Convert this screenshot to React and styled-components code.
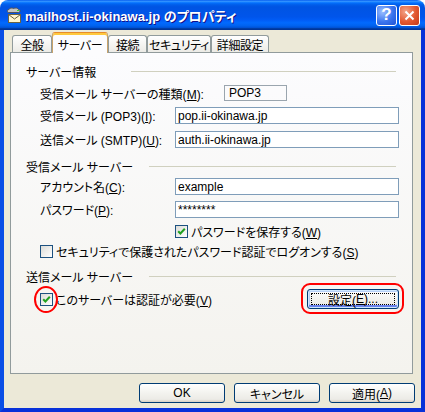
import styled, { createGlobalStyle, css } from "styled-components";

const GlobalStyle = createGlobalStyle`
  html, body {
    margin: 0;
    padding: 0;
    background: #ffffff;
  }
  body {
    font-family: "Liberation Sans", "Noto Sans CJK JP", sans-serif;
    font-size: 12px;
    font-feature-settings: "palt";
    color: #000;
  }
`;

const Window = styled.div`
  width: 425px;
  height: 412px;
  display: flex;
  flex-direction: column;
`;

const TitleBar = styled.div`
  height: 30px;
  flex: none;
  box-sizing: border-box;
  display: flex;
  align-items: center;
  padding: 0 5px 0 6px;
  border-radius: 8px 8px 0 0;
  background: linear-gradient(
    to bottom,
    #0058ee 0%,
    #3593ff 4%,
    #288eff 6%,
    #127dff 8%,
    #036ffc 10%,
    #0262ee 14%,
    #0057e5 20%,
    #0054e3 24%,
    #0055eb 56%,
    #005bf5 66%,
    #026afe 76%,
    #0062ef 86%,
    #0052d6 92%,
    #0040ab 94%,
    #003092 100%
  );
`;

const Title = styled.span`
  margin-left: 3px;
  flex: 1;
  color: #fff;
  font-weight: bold;
  font-size: 13px;
  white-space: nowrap;
  text-shadow: 1px 1px 0 #0f1089;
`;

const CaptionButtons = styled.div`
  display: flex;
  gap: 2px;
`;

const CaptionButton = styled.div`
  width: 21px;
  height: 21px;
  box-sizing: border-box;
  border: 1px solid #fff;
  border-radius: 3px;
  display: flex;
  align-items: center;
  justify-content: center;
  color: #fff;
  font-family: "Liberation Sans", sans-serif;
  font-weight: bold;
  font-size: 17px;
  background: ${(p) =>
    p.$close
      ? "radial-gradient(circle at 30% 30%, #f3a58a 0%, #e2572f 55%, #c23a1a 100%)"
      : "radial-gradient(circle at 30% 30%, #9cc0ff 0%, #3a74ee 55%, #1f52d4 100%)"};
`;

const Body = styled.div`
  flex: 1;
  box-sizing: border-box;
  background: #ece9d8;
  border: 4px solid #0831d9;
  border-top: 0;
  border-left-color: #0a4ee6;
  padding: 2px 8px 5px 6px;
  display: flex;
  flex-direction: column;
`;

const TabRow = styled.div`
  display: flex;
  align-items: flex-end;
  height: 20px;
  margin-left: 2px;
  position: relative;
  z-index: 1;
`;

const Tab = styled.div`
  width: ${(p) => p.$w}px;
  height: 17px;
  box-sizing: border-box;
  border: 1px solid #919b9c;
  border-bottom: 0;
  border-radius: 3px 3px 0 0;
  background: linear-gradient(#ffffff, #ecebe6);
  display: flex;
  align-items: center;
  justify-content: center;
  padding-top: 1px;
  white-space: nowrap;
  letter-spacing: -0.4px;
  ${(p) =>
    p.$active &&
    css`
      height: 21px;
      margin-bottom: -1px;
      background: #fcfcfe;
      border-top: 1px solid #e68b2c;
      border-left-color: #c9a36a;
      border-right-color: #c9a36a;
      box-shadow: inset 0 2px 0 #ffc83c;
      padding-top: 2px;
    `}
`;

const Pane = styled.div`
  height: 322px;
  box-sizing: border-box;
  border: 1px solid #919b9c;
  background: linear-gradient(#fcfcfe, #f4f3ee);
  padding: 11px 13px 0 15px;
  display: flex;
  flex-direction: column;
`;

const GroupHeader = styled.div`
  display: flex;
  align-items: center;
  height: 14px;
  margin-top: ${(p) => p.$top || 0}px;
`;

const GroupTitle = styled.span`
  width: ${(p) => p.$w}px;
  flex: none;
  white-space: nowrap;
`;

const GroupLine = styled.div`
  flex: 1;
  height: 1px;
  margin-right: 3px;
  background: #d0d0bf;
`;

const FieldRow = styled.div`
  display: flex;
  align-items: center;
  height: ${(p) => p.$h || 17}px;
  margin-top: ${(p) => p.$top}px;
  padding-left: ${(p) => p.$indent ?? 14}px;
`;

const Label = styled.label`
  width: ${(p) => p.$w || 135}px;
  flex: none;
  white-space: nowrap;
`;

const U = styled.span`
  text-decoration: underline;
`;

const TextBox = styled.input`
  flex: 1;
  min-width: 0;
  height: 17px;
  box-sizing: border-box;
  border: 1px solid #7f9db9;
  background: #fff;
  padding: 0 2px;
  margin: 0;
  font: inherit;
  color: #000;
  outline: none;
`;

const StaticBox = styled.div`
  width: 63px;
  height: 16px;
  box-sizing: border-box;
  border: 1px solid #9aa5ae;
  padding: 0 4px;
  display: flex;
  align-items: center;
`;

const CheckLine = styled.div`
  display: flex;
  align-items: center;
  gap: 3px;
  white-space: nowrap;
`;

const Box = styled.span`
  position: relative;
  width: 13px;
  height: 13px;
  flex: none;
  box-sizing: border-box;
  border: 1px solid #1c5180;
  background: linear-gradient(135deg, #dcdcd7, #ffffff);
  display: flex;
  align-items: center;
  justify-content: center;
  ${(p) =>
    p.$marked &&
    css`
      &::after {
        content: "";
        position: absolute;
        left: -7px;
        top: -8px;
        width: 20px;
        height: 23px;
        border: 2px solid #ff0000;
        border-radius: 50%;
      }
    `}
`;

const XPButton = styled.button`
  position: relative;
  width: ${(p) => p.$w || 86}px;
  height: 20px;
  box-sizing: border-box;
  margin: 0;
  padding: 0;
  border: 1px solid #003c74;
  border-radius: 3px;
  background: linear-gradient(#ffffff 0%, #f4f4f0 45%, #ecebe6 85%, #d6d0c5 100%);
  font: inherit;
  color: #000;
  display: flex;
  align-items: center;
  justify-content: center;
  ${(p) =>
    p.$focused &&
    css`
      box-shadow: inset 0 0 0 1px #cee7ff, inset 0 -2px 0 1px #6982ee,
        inset 1px 1px 0 1px #b8d1f8;
      &::before {
        content: "";
        position: absolute;
        inset: 3px;
        border: 1px dotted #000;
      }
    `}
  ${(p) =>
    p.$marked &&
    css`
      &::after {
        content: "";
        position: absolute;
        left: -7px;
        right: -6px;
        top: -7px;
        bottom: -6px;
        border: 2px solid #ff0000;
        border-radius: 9px;
      }
    `}
`;

const SettingsSlot = styled.div`
  margin-left: auto;
`;

const ButtonRow = styled.div`
  display: flex;
  justify-content: flex-end;
  gap: 9px;
  margin-top: 9px;
  margin-right: -2px;
`;

const MailIcon = () => (
  <svg width="16" height="16" viewBox="0 0 16 16">
    <path
      d="M2.5 5.5 C1 5.5 1 2.5 3 2.5 C3.5 1 6 0.5 7.5 1.5 C9 0.5 12 1 12.5 2.5 C14.5 2.5 14.5 5.5 12.5 5.5 Z"
      fill="#c4c4c4"
      stroke="#555"
    />
    <rect x="11" y="3" width="2" height="1" fill="#2fd22f" />
    <rect x="2.5" y="7.5" width="12" height="8" fill="#fff6cf" stroke="#6b6442" />
    <polyline points="2.5,7.5 8.5,12 14.5,7.5" fill="none" stroke="#6b6442" />
  </svg>
);

const CheckMark = () => (
  <svg width="9" height="9" viewBox="0 0 9 9">
    <polyline
      points="1.2,4.2 3.4,6.5 7.8,1.8"
      fill="none"
      stroke="#21a121"
      strokeWidth="2"
    />
  </svg>
);

const CloseGlyph = () => (
  <svg width="11" height="11" viewBox="0 0 11 11">
    <path d="M1.5 1.5 L9.5 9.5 M9.5 1.5 L1.5 9.5" stroke="#fff" strokeWidth="2" />
  </svg>
);

const tabs = [
  { label: "全般", w: 40 },
  { label: "サーバー", w: 56, active: true },
  { label: "接続", w: 39 },
  { label: "セキュリティ", w: 64 },
  { label: "詳細設定", w: 58 },
];

const PropertiesDialog = () => (
  <Window>
    <TitleBar>
      <MailIcon />
      <Title>mailhost.ii-okinawa.jp のプロパティ</Title>
      <CaptionButtons>
        <CaptionButton>?</CaptionButton>
        <CaptionButton $close>
          <CloseGlyph />
        </CaptionButton>
      </CaptionButtons>
    </TitleBar>
    <Body>
      <TabRow>
        {tabs.map((t) => (
          <Tab key={t.label} $w={t.w} $active={t.active}>
            {t.label}
          </Tab>
        ))}
      </TabRow>
      <Pane>
        <GroupHeader>
          <GroupTitle $w={105}>サーバー情報</GroupTitle>
          <GroupLine />
        </GroupHeader>
        <FieldRow $top={7} $h={16}>
          <Label $w={184}>
            受信メール サーバーの種類(<U>M</U>):
          </Label>
          <StaticBox>POP3</StaticBox>
        </FieldRow>
        <FieldRow $top={6}>
          <Label>
            受信メール (POP3)(<U>I</U>):
          </Label>
          <TextBox readOnly value="pop.ii-okinawa.jp" />
        </FieldRow>
        <FieldRow $top={7}>
          <Label>
            送信メール (SMTP)(<U>U</U>):
          </Label>
          <TextBox readOnly value="auth.ii-okinawa.jp" />
        </FieldRow>

        <GroupHeader $top={11}>
          <GroupTitle $w={123}>受信メール サーバー</GroupTitle>
          <GroupLine />
        </GroupHeader>
        <FieldRow $top={5}>
          <Label>
            アカウント名(<U>C</U>):
          </Label>
          <TextBox readOnly value="example" />
        </FieldRow>
        <FieldRow $top={6}>
          <Label>
            パスワード(<U>P</U>):
          </Label>
          <TextBox readOnly value="********" />
        </FieldRow>
        <FieldRow $top={7} $h={13} $indent={149}>
          <CheckLine>
            <Box>
              <CheckMark />
            </Box>
            <span>
              パスワードを保存する(<U>W</U>)
            </span>
          </CheckLine>
        </FieldRow>
        <FieldRow $top={7} $h={13}>
          <CheckLine>
            <Box />
            <span>
              セキュリティで保護されたパスワード認証でログオンする(<U>S</U>)
            </span>
          </CheckLine>
        </FieldRow>

        <GroupHeader $top={11}>
          <GroupTitle $w={123}>送信メール サーバー</GroupTitle>
          <GroupLine />
        </GroupHeader>
        <FieldRow $top={6} $h={20}>
          <CheckLine>
            <Box $marked>
              <CheckMark />
            </Box>
            <span>
              このサーバーは認証が必要(<U>V</U>)
            </span>
          </CheckLine>
          <SettingsSlot>
            <XPButton $w={92} $focused $marked>
              設定(<U>E</U>)...
            </XPButton>
          </SettingsSlot>
        </FieldRow>
      </Pane>
      <ButtonRow>
        <XPButton>OK</XPButton>
        <XPButton>キャンセル</XPButton>
        <XPButton>
          適用(<U>A</U>)
        </XPButton>
      </ButtonRow>
    </Body>
  </Window>
);

export default function App() {
  return (
    <>
      <GlobalStyle />
      <PropertiesDialog />
    </>
  );
}
